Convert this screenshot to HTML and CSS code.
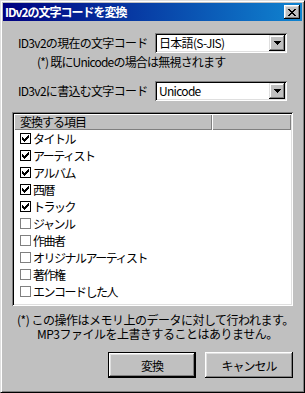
FILE: index.html
```html
<!DOCTYPE html>
<html lang="ja">
<head>
    <meta charset="UTF-8">
    <meta name="viewport" content="width=device-width, initial-scale=1.0">
    <title>IDv2の文字コードを変換</title>
    <link rel="stylesheet" href="styles.css">
</head>
<body>

    <div class="window">
        <!-- Title bar -->
        <div class="titlebar">
            <span class="title">IDv2の文字コードを変換</span>
            <span class="close-btn">
                <svg width="8" height="7" viewBox="0 0 8 7" shape-rendering="crispEdges">
                    <path d="M0 0h2v1H0z M6 0h2v1H6z M1 1h2v1H1z M5 1h2v1H5z M2 2h4v1H2z M3 3h2v1H3z M2 4h4v1H2z M1 5h2v1H1z M5 5h2v1H5z M0 6h2v1H0z M6 6h2v1H6z" fill="#000"/>
                </svg>
            </span>
        </div>

        <div class="content">
            <!-- Current encoding -->
            <div class="row row-first">
                <span class="label">ID3v2の現在の文字コード</span>
                <div class="combo">
                    <span class="combo-value">日本語(S-JIS)</span>
                    <span class="combo-btn">
                        <svg width="7" height="4" viewBox="0 0 7 4" shape-rendering="crispEdges">
                            <path d="M0 0h7v1H0z M1 1h5v1H1z M2 2h3v1H2z M3 3h1v1H3z" fill="#000"/>
                        </svg>
                    </span>
                </div>
            </div>
            <div class="note">(*) 既にUnicodeの場合は無視されます</div>

            <!-- Target encoding -->
            <div class="row">
                <span class="label">ID3v2に書込む文字コード</span>
                <div class="combo">
                    <span class="combo-value">Unicode</span>
                    <span class="combo-btn">
                        <svg width="7" height="4" viewBox="0 0 7 4" shape-rendering="crispEdges">
                            <path d="M0 0h7v1H0z M1 1h5v1H1z M2 2h3v1H2z M3 3h1v1H3z" fill="#000"/>
                        </svg>
                    </span>
                </div>
            </div>

            <!-- Items to convert -->
            <div class="listview">
                <div class="lv-header">
                    <span class="lv-col lv-col-main">変換する項目</span>
                    <span class="lv-col lv-col-rest"></span>
                </div>
                <ul class="lv-items" id="items"></ul>
            </div>

            <p class="footnote">
                <span class="fn-line">(*) この操作はメモリ上のデータに対して行われます。</span>
                <span class="fn-line fn-indent">MP3ファイルを上書きすることはありません。</span>
            </p>

            <div class="buttons">
                <button class="btn btn-default">変換</button>
                <button class="btn">キャンセル</button>
            </div>
        </div>
    </div>

    <script>
        const items = [
            { name: 'タイトル', checked: true },
            { name: 'アーティスト', checked: true },
            { name: 'アルバム', checked: true },
            { name: '西暦', checked: true },
            { name: 'トラック', checked: true },
            { name: 'ジャンル', checked: false },
            { name: '作曲者', checked: false },
            { name: 'オリジナルアーティスト', checked: false },
            { name: '著作権', checked: false },
            { name: 'エンコードした人', checked: false }
        ];

        const checkMark = '<svg width="7" height="7" viewBox="0 0 7 7" shape-rendering="crispEdges">' +
            '<path d="M6 0h1v1H6z M5 1h2v1H5z M0 2h1v1H0z M4 2h3v1H4z M0 3h2v1H0z M3 3h3v1H3z M0 4h5v1H0z M1 5h3v1H1z M2 6h1v1H2z" fill="#000"/></svg>';

        const list = document.getElementById('items');

        items.forEach(function(item) {
            const li = document.createElement('li');
            li.className = 'lv-item';
            const box = document.createElement('span');
            box.className = item.checked ? 'check checked' : 'check';
            if (item.checked) {
                box.innerHTML = checkMark;
            }
            li.appendChild(box);
            li.appendChild(document.createTextNode(item.name));
            list.appendChild(li);
        });
    </script>

</body>
</html>
```

FILE: styles.css
```css
* {
    margin: 0;
    padding: 0;
    box-sizing: border-box;
}

body {
    font-family: "Noto Sans CJK JP", "Liberation Sans", sans-serif;
    font-size: 12px;
    letter-spacing: -1px;
    color: #000;
    background-color: #c0c0c0;
}

.window {
    width: 305px;
    height: 393px;
    background-color: #c0c0c0;
    border-top: 1px solid #dfdfdf;
    border-left: 1px solid #dfdfdf;
    border-right: 1px solid #000;
    border-bottom: 1px solid #000;
    box-shadow: inset 1px 1px #fff, inset -1px -1px #808080;
    padding: 2px;
}

/* Title bar */
.titlebar {
    height: 18px;
    display: flex;
    align-items: center;
    justify-content: space-between;
    padding: 0 2px;
    background: linear-gradient(to right, #000080, #1084d0);
}

.title {
    color: #fff;
    font-weight: bold;
    line-height: 18px;
}

.close-btn {
    width: 16px;
    height: 14px;
    display: flex;
    align-items: center;
    justify-content: center;
    background-color: #c0c0c0;
    box-shadow: inset -1px -1px #000, inset 1px 1px #fff, inset -2px -2px #808080, inset 2px 2px #dfdfdf;
}

.close-btn svg {
    display: block;
    margin-left: -1px;
}

/* Dialog body */
.content {
    display: flex;
    flex-direction: column;
}

.row {
    display: flex;
    align-items: center;
    height: 20px;
    margin-top: 12px;
    padding-left: 15px;
}

.label {
    width: 137px;
    line-height: 14px;
    letter-spacing: -0.7px;
}

.note {
    margin-top: 2px;
    padding-left: 34px;
    line-height: 14px;
    letter-spacing: -0.8px;
}

/* Combo box */
.combo {
    width: 132px;
    height: 20px;
    display: flex;
    padding: 2px;
    background-color: #fff;
    box-shadow: inset 1px 1px #808080, inset -1px -1px #fff, inset 2px 2px #000, inset -2px -2px #dfdfdf;
}

.combo-value {
    flex: 1;
    padding-left: 2px;
    line-height: 16px;
    letter-spacing: -0.7px;
}

.combo-btn {
    width: 16px;
    height: 16px;
    display: flex;
    align-items: center;
    justify-content: center;
    background-color: #c0c0c0;
    box-shadow: inset -1px -1px #000, inset 1px 1px #dfdfdf, inset -2px -2px #808080, inset 2px 2px #fff;
}

.combo-btn svg {
    display: block;
}

/* List view */
.listview {
    width: 281px;
    height: 194px;
    margin-top: 11px;
    margin-left: 9px;
    padding: 2px;
    background-color: #fff;
    box-shadow: inset 1px 1px #808080, inset -1px -1px #fff, inset 2px 2px #000, inset -2px -2px #dfdfdf;
}

.lv-header {
    display: flex;
    height: 16px;
}

.lv-col {
    height: 16px;
    line-height: 16px;
    background-color: #c0c0c0;
    box-shadow: inset 1px 1px #fff, inset -1px -1px #808080;
}

.lv-col-main {
    width: 198px;
    padding-left: 6px;
}

.lv-col-rest {
    flex: 1;
}

.lv-items {
    list-style: none;
}

.lv-item {
    display: flex;
    align-items: center;
    height: 17px;
    padding-left: 6px;
    line-height: 17px;
    letter-spacing: -1.5px;
}

.check {
    width: 11px;
    height: 11px;
    margin-right: 2px;
    border: 1px solid #808080;
    background-color: #fff;
    display: flex;
    align-items: center;
    justify-content: center;
}

.check.checked {
    border-color: #000;
}

.check svg {
    display: block;
}

/* Footnote */
.footnote {
    margin-top: 7px;
    padding-left: 14px;
    line-height: 14px;
    letter-spacing: -0.5px;
}

.fn-line {
    display: block;
}

.fn-indent {
    padding-left: 20px;
}

/* Buttons */
.buttons {
    display: flex;
    justify-content: flex-end;
    gap: 9px;
    margin-top: 11px;
    padding-right: 9px;
}

.btn {
    width: 88px;
    height: 26px;
    border: none;
    font-family: inherit;
    font-size: 12px;
    letter-spacing: -1px;
    color: #000;
    background-color: #c0c0c0;
    box-shadow: inset -1px -1px #000, inset 1px 1px #fff, inset -2px -2px #808080, inset 2px 2px #dfdfdf;
    cursor: pointer;
}

.btn-default {
    box-shadow: inset 0 0 0 1px #000, inset -2px -2px #000, inset 2px 2px #fff, inset -3px -3px #808080, inset 3px 3px #dfdfdf;
}
```
